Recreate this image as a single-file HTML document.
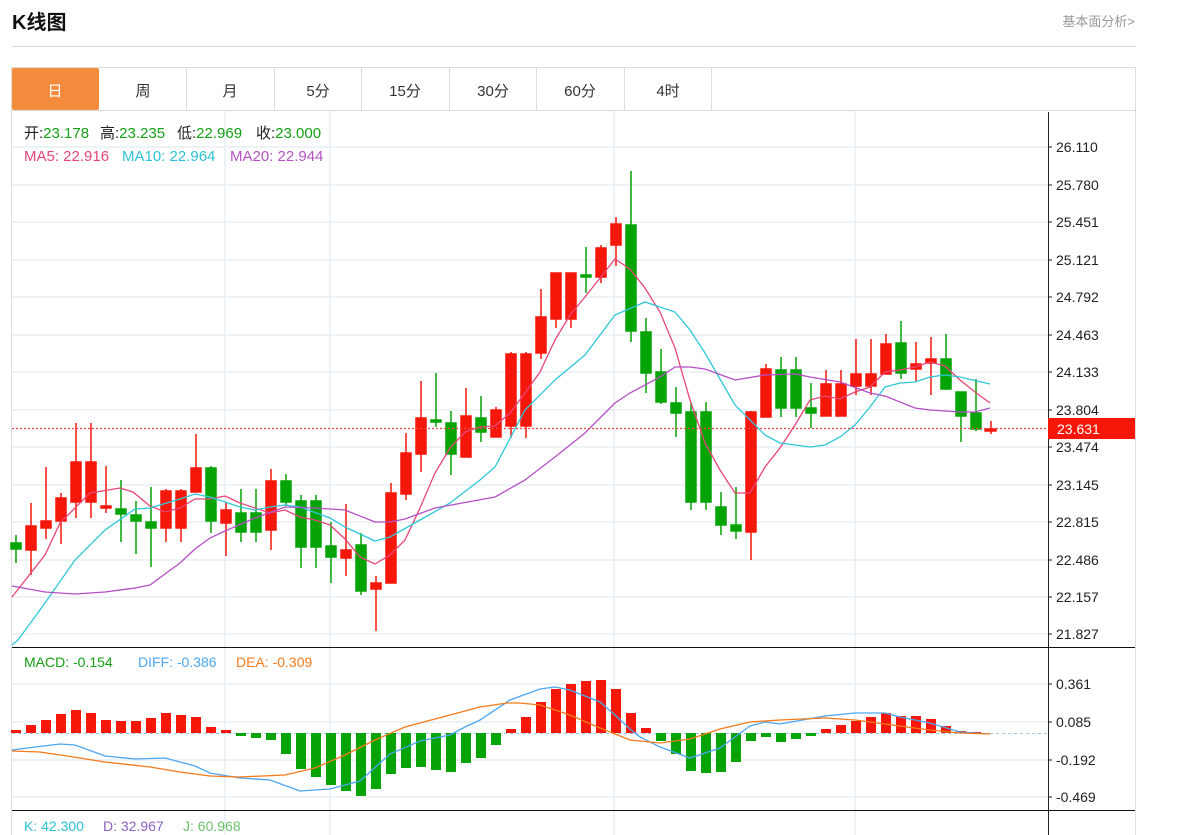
<!DOCTYPE html>
<html><head><meta charset="utf-8"><style>
body{margin:0;background:#fff;width:1182px;height:835px;overflow:hidden;font-family:"Liberation Sans","Noto Sans CJK SC",sans-serif;position:relative}
.t{position:absolute;left:12px;top:6px;font-size:20px;font-weight:bold;color:#111}
.lk{position:absolute;right:47px;top:11px;font-size:13px;color:#999}
.hr{position:absolute;left:12px;top:46px;width:1124px;height:1px;background:#d4d4d4}
</style></head><body>
<div class="t">K线图</div>
<div class="lk">基本面分析&gt;</div>
<div class="hr"></div>
<svg width="1182" height="835" style="position:absolute;left:0;top:0" font-family="Liberation Sans, Noto Sans CJK SC, sans-serif">
<rect x="11.5" y="67.5" width="1124" height="780" fill="none" stroke="#dcdcdc"/>
<line x1="12" y1="110.5" x2="1135" y2="110.5" stroke="#dcdcdc"/>
<rect x="12" y="68" width="87" height="42" fill="#f28c3c" rx="2"/>
<g stroke="#dcdcdc"><line x1="186.5" y1="68" x2="186.5" y2="110"/><line x1="274.5" y1="68" x2="274.5" y2="110"/><line x1="361.5" y1="68" x2="361.5" y2="110"/><line x1="449.5" y1="68" x2="449.5" y2="110"/><line x1="536.5" y1="68" x2="536.5" y2="110"/><line x1="624.5" y1="68" x2="624.5" y2="110"/><line x1="711.5" y1="68" x2="711.5" y2="110"/></g>
<g font-size="15" text-anchor="middle" fill="#333"><text x="55" y="96" fill="#fff">日</text><text x="143" y="96">周</text><text x="230" y="96">月</text><text x="318" y="96">5分</text><text x="405" y="96">15分</text><text x="493" y="96">30分</text><text x="580" y="96">60分</text><text x="668" y="96">4时</text></g>
<!-- grid -->
<g stroke="#e6edf3" stroke-width="1.5">
<line x1="12" y1="147" x2="1048" y2="147"/><line x1="12" y1="185" x2="1048" y2="185"/><line x1="12" y1="222" x2="1048" y2="222"/><line x1="12" y1="260" x2="1048" y2="260"/><line x1="12" y1="297" x2="1048" y2="297"/><line x1="12" y1="335" x2="1048" y2="335"/><line x1="12" y1="372" x2="1048" y2="372"/><line x1="12" y1="410" x2="1048" y2="410"/><line x1="12" y1="447" x2="1048" y2="447"/><line x1="12" y1="485" x2="1048" y2="485"/><line x1="12" y1="522" x2="1048" y2="522"/><line x1="12" y1="560" x2="1048" y2="560"/><line x1="12" y1="597" x2="1048" y2="597"/><line x1="12" y1="634" x2="1048" y2="634"/>
<line x1="12" y1="684" x2="1048" y2="684"/><line x1="12" y1="722" x2="1048" y2="722"/><line x1="12" y1="760" x2="1048" y2="760"/><line x1="12" y1="797" x2="1048" y2="797"/>
<line x1="225" y1="111" x2="225" y2="835"/><line x1="330" y1="111" x2="330" y2="835"/><line x1="614" y1="111" x2="614" y2="835"/><line x1="855" y1="111" x2="855" y2="835"/>
</g>
<line x1="1048.5" y1="112" x2="1048.5" y2="835" stroke="#222"/>
<line x1="12" y1="647.5" x2="1135" y2="647.5" stroke="#111"/>
<line x1="12" y1="810.5" x2="1135" y2="810.5" stroke="#111"/>
<g font-size="14" fill="#222" stroke="none">
<text x="1056" y="152">26.110</text><text x="1056" y="190">25.780</text><text x="1056" y="227">25.451</text><text x="1056" y="265">25.121</text><text x="1056" y="302">24.792</text><text x="1056" y="340">24.463</text><text x="1056" y="377">24.133</text><text x="1056" y="415">23.804</text><text x="1056" y="452">23.474</text><text x="1056" y="490">23.145</text><text x="1056" y="527">22.815</text><text x="1056" y="565">22.486</text><text x="1056" y="602">22.157</text><text x="1056" y="639">21.827</text>
<text x="1056" y="689">0.361</text><text x="1056" y="727">0.085</text><text x="1056" y="765">-0.192</text><text x="1056" y="802">-0.469</text>
</g>
<g stroke="#222"><line x1="1048" y1="147" x2="1052" y2="147"/><line x1="1048" y1="185" x2="1052" y2="185"/><line x1="1048" y1="222" x2="1052" y2="222"/><line x1="1048" y1="260" x2="1052" y2="260"/><line x1="1048" y1="297" x2="1052" y2="297"/><line x1="1048" y1="335" x2="1052" y2="335"/><line x1="1048" y1="372" x2="1052" y2="372"/><line x1="1048" y1="410" x2="1052" y2="410"/><line x1="1048" y1="447" x2="1052" y2="447"/><line x1="1048" y1="485" x2="1052" y2="485"/><line x1="1048" y1="522" x2="1052" y2="522"/><line x1="1048" y1="560" x2="1052" y2="560"/><line x1="1048" y1="597" x2="1052" y2="597"/><line x1="1048" y1="634" x2="1052" y2="634"/><line x1="1048" y1="684" x2="1052" y2="684"/><line x1="1048" y1="722" x2="1052" y2="722"/><line x1="1048" y1="760" x2="1052" y2="760"/><line x1="1048" y1="797" x2="1052" y2="797"/></g>
<!-- legends -->
<g font-size="15">
<text x="24" y="138" fill="#222">开:<tspan fill="#14a014">23.178</tspan></text>
<text x="100" y="138" fill="#222">高:<tspan fill="#14a014">23.235</tspan></text>
<text x="177" y="138" fill="#222">低:<tspan fill="#14a014">22.969</tspan></text>
<text x="256" y="138" fill="#222">收:<tspan fill="#14a014">23.000</tspan></text>
<text x="24" y="161" fill="#e8457a">MA5: 22.916</text>
<text x="122" y="161" fill="#2ec2d6">MA10: 22.964</text>
<text x="230" y="161" fill="#b452c4">MA20: 22.944</text>
</g>
<g font-size="14">
<text x="24" y="667" fill="#14a014">MACD: -0.154</text>
<text x="138" y="667" fill="#4da6f0">DIFF: -0.386</text>
<text x="236" y="667" fill="#f57a1a">DEA: -0.309</text>
<text x="24" y="831" fill="#2ec2d6">K: 42.300</text>
<text x="103" y="831" fill="#8a63c0">D: 32.967</text>
<text x="183" y="831" fill="#6cc06c">J: 60.968</text>
</g>
<!-- candles -->
<g stroke-width="1.5">
<g fill="#05a305" stroke="#05a305">
<line x1="16" y1="535" x2="16" y2="563"/><rect x="11" y="543" width="10" height="6"/>
<line x1="121" y1="480" x2="121" y2="542"/><rect x="116" y="509" width="10" height="5"/>
<line x1="136" y1="501" x2="136" y2="554"/><rect x="131" y="515" width="10" height="6"/>
<line x1="151" y1="487" x2="151" y2="567"/><rect x="146" y="522" width="10" height="6"/>
<line x1="211" y1="466" x2="211" y2="533"/><rect x="206" y="468" width="10" height="53"/>
<line x1="241" y1="489" x2="241" y2="542"/><rect x="236" y="513" width="10" height="19"/>
<line x1="256" y1="489" x2="256" y2="542"/><rect x="251" y="513" width="10" height="19"/>
<line x1="286" y1="474" x2="286" y2="506"/><rect x="281" y="481" width="10" height="21"/>
<line x1="301" y1="495" x2="301" y2="568"/><rect x="296" y="501" width="10" height="46"/>
<line x1="316" y1="495" x2="316" y2="568"/><rect x="311" y="501" width="10" height="46"/>
<line x1="331" y1="522" x2="331" y2="583"/><rect x="326" y="546" width="10" height="11"/>
<line x1="361" y1="533" x2="361" y2="595"/><rect x="356" y="545" width="10" height="46"/>
<line x1="436" y1="373" x2="436" y2="427"/><rect x="431" y="420" width="10" height="2"/>
<line x1="451" y1="411" x2="451" y2="475"/><rect x="446" y="423" width="10" height="31"/>
<line x1="481" y1="396" x2="481" y2="442"/><rect x="476" y="418" width="10" height="14"/>
<line x1="586" y1="247" x2="586" y2="293"/><rect x="581" y="275" width="10" height="2"/>
<line x1="631" y1="171" x2="631" y2="342"/><rect x="626" y="225" width="10" height="106"/>
<line x1="646" y1="318" x2="646" y2="393"/><rect x="641" y="332" width="10" height="41"/>
<line x1="661" y1="349" x2="661" y2="404"/><rect x="656" y="372" width="10" height="30"/>
<line x1="676" y1="387" x2="676" y2="437"/><rect x="671" y="403" width="10" height="10"/>
<line x1="691" y1="402" x2="691" y2="510"/><rect x="686" y="412" width="10" height="90"/>
<line x1="706" y1="402" x2="706" y2="510"/><rect x="701" y="412" width="10" height="90"/>
<line x1="721" y1="492" x2="721" y2="535"/><rect x="716" y="507" width="10" height="18"/>
<line x1="736" y1="487" x2="736" y2="539"/><rect x="731" y="525" width="10" height="6"/>
<line x1="781" y1="357" x2="781" y2="417"/><rect x="776" y="370" width="10" height="38"/>
<line x1="796" y1="357" x2="796" y2="417"/><rect x="791" y="370" width="10" height="38"/>
<line x1="811" y1="383" x2="811" y2="428"/><rect x="806" y="408" width="10" height="5"/>
<line x1="901" y1="321" x2="901" y2="379"/><rect x="896" y="343" width="10" height="30"/>
<line x1="946" y1="334" x2="946" y2="390"/><rect x="941" y="359" width="10" height="30"/>
<line x1="961" y1="392" x2="961" y2="442"/><rect x="956" y="392" width="10" height="24"/>
<line x1="976" y1="379" x2="976" y2="431"/><rect x="971" y="413" width="10" height="16"/>
</g>
<g fill="#f5170a" stroke="#f5170a">
<line x1="31" y1="503" x2="31" y2="575"/><rect x="26" y="526" width="10" height="24"/>
<line x1="46" y1="467" x2="46" y2="539"/><rect x="41" y="521" width="10" height="7"/>
<line x1="61" y1="493" x2="61" y2="544"/><rect x="56" y="498" width="10" height="23"/>
<line x1="76" y1="423" x2="76" y2="518"/><rect x="71" y="462" width="10" height="40"/>
<line x1="91" y1="423" x2="91" y2="518"/><rect x="86" y="462" width="10" height="40"/>
<line x1="106" y1="466" x2="106" y2="513"/><rect x="101" y="506" width="10" height="2"/>
<line x1="166" y1="489" x2="166" y2="542"/><rect x="161" y="491" width="10" height="37"/>
<line x1="181" y1="489" x2="181" y2="542"/><rect x="176" y="491" width="10" height="37"/>
<line x1="196" y1="434" x2="196" y2="492"/><rect x="191" y="468" width="10" height="24"/>
<line x1="226" y1="502" x2="226" y2="556"/><rect x="221" y="510" width="10" height="13"/>
<line x1="271" y1="469" x2="271" y2="550"/><rect x="266" y="481" width="10" height="49"/>
<line x1="346" y1="504" x2="346" y2="576"/><rect x="341" y="550" width="10" height="8"/>
<line x1="376" y1="576" x2="376" y2="631"/><rect x="371" y="583" width="10" height="6"/>
<line x1="391" y1="483" x2="391" y2="583"/><rect x="386" y="493" width="10" height="90"/>
<line x1="406" y1="433" x2="406" y2="500"/><rect x="401" y="453" width="10" height="41"/>
<line x1="421" y1="381" x2="421" y2="472"/><rect x="416" y="418" width="10" height="36"/>
<line x1="466" y1="388" x2="466" y2="457"/><rect x="461" y="416" width="10" height="41"/>
<line x1="496" y1="407" x2="496" y2="437"/><rect x="491" y="410" width="10" height="27"/>
<line x1="511" y1="352" x2="511" y2="438"/><rect x="506" y="354" width="10" height="72"/>
<line x1="526" y1="352" x2="526" y2="438"/><rect x="521" y="354" width="10" height="72"/>
<line x1="541" y1="289" x2="541" y2="359"/><rect x="536" y="317" width="10" height="36"/>
<line x1="556" y1="273" x2="556" y2="328"/><rect x="551" y="273" width="10" height="46"/>
<line x1="571" y1="273" x2="571" y2="328"/><rect x="566" y="273" width="10" height="46"/>
<line x1="601" y1="245" x2="601" y2="283"/><rect x="596" y="248" width="10" height="29"/>
<line x1="616" y1="217" x2="616" y2="266"/><rect x="611" y="224" width="10" height="21"/>
<line x1="751" y1="411" x2="751" y2="560"/><rect x="746" y="412" width="10" height="120"/>
<line x1="766" y1="364" x2="766" y2="417"/><rect x="761" y="369" width="10" height="48"/>
<line x1="826" y1="370" x2="826" y2="416"/><rect x="821" y="384" width="10" height="32"/>
<line x1="841" y1="370" x2="841" y2="416"/><rect x="836" y="384" width="10" height="32"/>
<line x1="856" y1="339" x2="856" y2="395"/><rect x="851" y="374" width="10" height="12"/>
<line x1="871" y1="339" x2="871" y2="395"/><rect x="866" y="374" width="10" height="12"/>
<line x1="886" y1="334" x2="886" y2="374"/><rect x="881" y="344" width="10" height="30"/>
<line x1="916" y1="342" x2="916" y2="382"/><rect x="911" y="364" width="10" height="5"/>
<line x1="931" y1="337" x2="931" y2="395"/><rect x="926" y="359" width="10" height="4"/>
<line x1="991" y1="421" x2="991" y2="434"/><rect x="985" y="429" width="11" height="2"/>
</g>
</g>
<!-- MA lines -->
<g fill="none" stroke-width="1.3">
<polyline stroke="#e8457a" points="12,597 45,555 60,523 90,493 120,488 133,492 150,506 165,512 180,508 195,499 210,499 225,496 240,503 270,513 285,510 300,517 315,520 330,525 345,539 360,557 375,564 390,555 405,540 420,508 435,473 450,448 465,432 480,427 495,426 510,413 525,393 540,372 555,340 570,315 585,297 600,278 615,259 630,269 645,288 660,312 675,348 690,400 705,443 720,470 735,493 750,493 765,467 780,448 795,425 810,400 825,396 840,399 855,392 870,387 885,372 900,370 915,367 930,362 945,366 960,380 975,392 990,403"/>
<polyline stroke="#2ec7d9" points="12,645 18,640 45,603 75,560 105,530 135,509 150,508 180,499 195,494 210,497 240,507 255,510 270,507 285,505 300,507 330,518 345,527 375,541 390,537 420,520 450,503 480,480 495,467 525,410 555,380 585,355 615,315 645,302 675,312 690,330 705,353 735,405 765,435 780,443 810,447 825,445 840,437 855,425 870,407 885,387 900,383 915,382 930,377 945,375 960,377 990,384"/>
<polyline stroke="#b54ec5" points="12,586 45,592 75,594 105,592 135,588 150,585 180,563 195,549 210,538 225,531 255,518 285,507 315,508 345,510 375,522 390,522 405,519 435,508 495,497 525,480 555,457 585,433 615,403 630,393 660,377 675,367 690,367 705,369 735,380 765,375 795,374 810,377 840,382 870,393 885,396 915,408 930,410 960,412 975,412 990,408"/>
</g>
<line x1="12" y1="428.5" x2="1048" y2="428.5" stroke="#f04848" stroke-dasharray="2,2" stroke-width="1.2"/>
<rect x="1048" y="418" width="87" height="21" fill="#f5170a"/>
<text x="1057" y="434" font-size="14" fill="#fff">23.631</text>
<!-- MACD bars -->
<line x1="12" y1="733.5" x2="1048" y2="733.5" stroke="#9ccbe8" stroke-dasharray="3,3"/>
<g fill="#f5170a">
<rect x="11" y="730" width="10" height="3"/><rect x="26" y="725" width="10" height="8"/><rect x="41" y="720" width="10" height="13"/><rect x="56" y="714" width="10" height="19"/><rect x="71" y="710" width="10" height="23"/><rect x="86" y="713" width="10" height="20"/><rect x="101" y="720" width="10" height="13"/><rect x="116" y="721" width="10" height="12"/><rect x="131" y="721" width="10" height="12"/><rect x="146" y="718" width="10" height="15"/><rect x="161" y="713" width="10" height="20"/><rect x="176" y="715" width="10" height="18"/><rect x="191" y="717" width="10" height="16"/><rect x="206" y="727" width="10" height="6"/><rect x="221" y="730" width="10" height="3"/>
<rect x="506" y="729" width="10" height="4"/><rect x="521" y="717" width="10" height="16"/><rect x="536" y="702" width="10" height="31"/><rect x="551" y="689" width="10" height="44"/><rect x="566" y="684" width="10" height="49"/><rect x="581" y="681" width="10" height="52"/><rect x="596" y="680" width="10" height="53"/><rect x="611" y="689" width="10" height="44"/><rect x="626" y="713" width="10" height="20"/><rect x="641" y="728" width="10" height="5"/>
<rect x="821" y="729" width="10" height="4"/><rect x="836" y="725" width="10" height="8"/><rect x="851" y="721" width="10" height="12"/><rect x="866" y="717" width="10" height="16"/><rect x="881" y="713" width="10" height="20"/><rect x="896" y="716" width="10" height="17"/><rect x="911" y="716" width="10" height="17"/><rect x="926" y="719" width="10" height="14"/><rect x="941" y="726" width="10" height="7"/><rect x="956" y="731" width="10" height="2"/><rect x="971" y="732" width="10" height="1"/>
</g>
<g fill="#05a305">
<rect x="236" y="733" width="10" height="3"/><rect x="251" y="733" width="10" height="5"/><rect x="266" y="733" width="10" height="7"/><rect x="281" y="733" width="10" height="21"/><rect x="296" y="733" width="10" height="36"/><rect x="311" y="733" width="10" height="44"/><rect x="326" y="733" width="10" height="52"/><rect x="341" y="733" width="10" height="58"/><rect x="356" y="733" width="10" height="63"/><rect x="371" y="733" width="10" height="56"/><rect x="386" y="733" width="10" height="41"/><rect x="401" y="733" width="10" height="35"/><rect x="416" y="733" width="10" height="34"/><rect x="431" y="733" width="10" height="37"/><rect x="446" y="733" width="10" height="39"/><rect x="461" y="733" width="10" height="30"/><rect x="476" y="733" width="10" height="25"/><rect x="491" y="733" width="10" height="12"/>
<rect x="656" y="733" width="10" height="8"/><rect x="671" y="733" width="10" height="21"/><rect x="686" y="733" width="10" height="38"/><rect x="701" y="733" width="10" height="40"/><rect x="716" y="733" width="10" height="39"/><rect x="731" y="733" width="10" height="29"/><rect x="746" y="733" width="10" height="8"/><rect x="761" y="733" width="10" height="4"/><rect x="776" y="733" width="10" height="9"/><rect x="791" y="733" width="10" height="6"/><rect x="806" y="733" width="10" height="3"/>
</g>
<g fill="none" stroke-width="1.3">
<polyline stroke="#4da6f0" points="12,750 35,747 60,744 75,745 105,756 135,759 165,758 195,766 210,773 240,778 270,780 300,791 330,789 360,781 390,754 420,741 450,735 465,727 480,720 510,700 540,689 555,687 570,690 600,702 615,715 630,729 640,737 660,747 690,758 720,748 750,726 765,722 780,724 825,716 855,713 885,713 900,717 930,723 960,732 990,734"/>
<polyline stroke="#f57a1a" points="12,751 40,752 67,756 105,762 150,767 180,772 210,776 240,777 285,775 315,768 345,755 375,740 405,727 450,715 480,707 507,703 520,703 540,705 570,715 600,728 630,740 660,743 690,739 720,729 750,722 780,720 825,718 855,720 885,724 930,730 960,733 990,734"/>
</g>
</svg>
</body></html>
